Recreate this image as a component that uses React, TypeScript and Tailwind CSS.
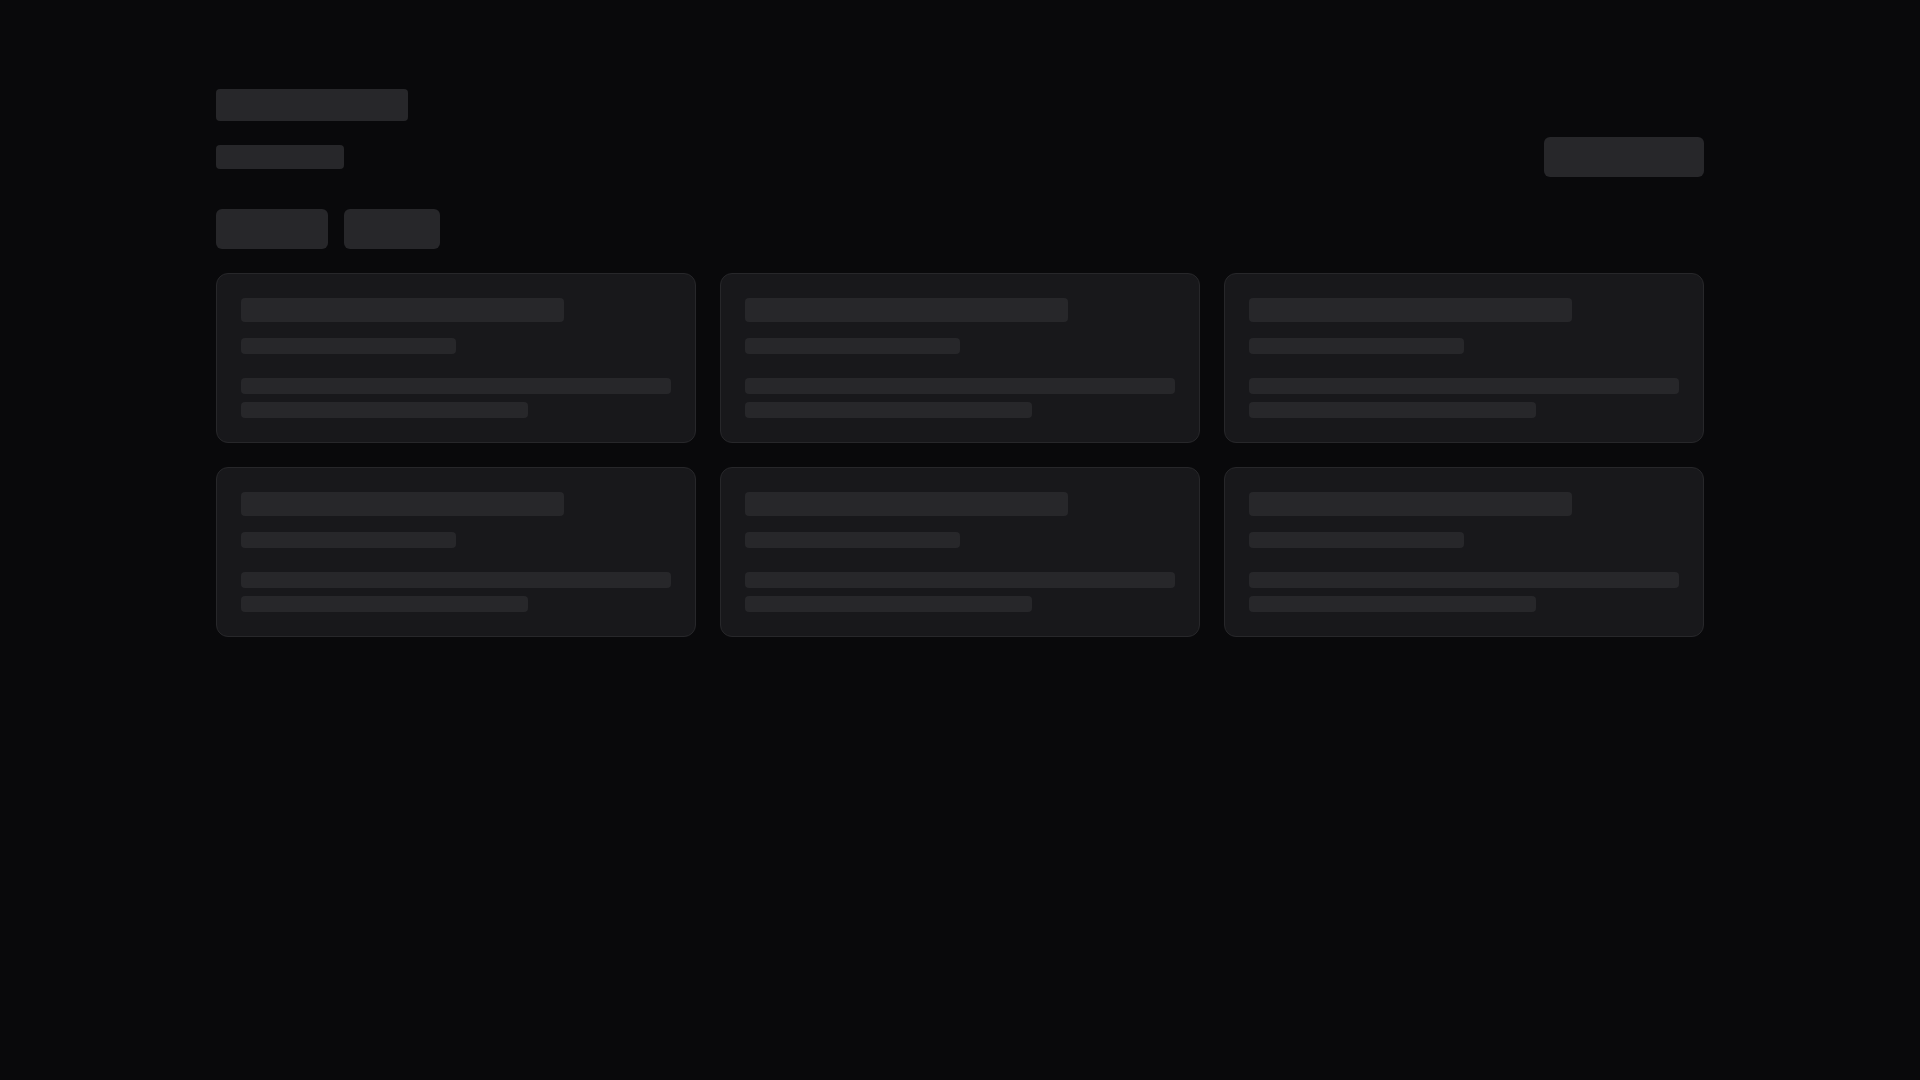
import React from 'react'

const SkeletonCard: React.FC = () => (
  <div className="rounded-xl border border-zinc-800 bg-zinc-900 p-6">
    <div className="h-6 w-3/4 rounded bg-zinc-800" />
    <div className="mt-4 h-4 w-1/2 rounded bg-zinc-800" />
    <div className="mt-6 space-y-2">
      <div className="h-4 w-full rounded bg-zinc-800" />
      <div className="h-4 w-2/3 rounded bg-zinc-800" />
    </div>
  </div>
)

const App: React.FC = () => {
  const cards = [0, 1, 2, 3, 4, 5]

  return (
    <div className="min-h-screen bg-zinc-950 font-['Inter',sans-serif]">
      <div className="mx-auto max-w-[1536px] px-6 pt-[89px]">
        {/* Header */}
        <div className="flex items-start justify-between">
          <div className="flex flex-col gap-6">
            <div className="h-8 w-48 rounded bg-zinc-800" />
            <div className="h-6 w-32 rounded bg-zinc-800" />
          </div>
          <div className="mt-12 h-10 w-40 rounded-md bg-zinc-800" />
        </div>

        {/* Tabs */}
        <div className="mt-8 flex gap-4">
          <div className="h-10 w-28 rounded-md bg-zinc-800" />
          <div className="h-10 w-24 rounded-md bg-zinc-800" />
        </div>

        {/* Cards */}
        <div className="mt-6 grid grid-cols-3 gap-6">
          {cards.map((i) => (
            <SkeletonCard key={i} />
          ))}
        </div>
      </div>
    </div>
  )
}

export default App
